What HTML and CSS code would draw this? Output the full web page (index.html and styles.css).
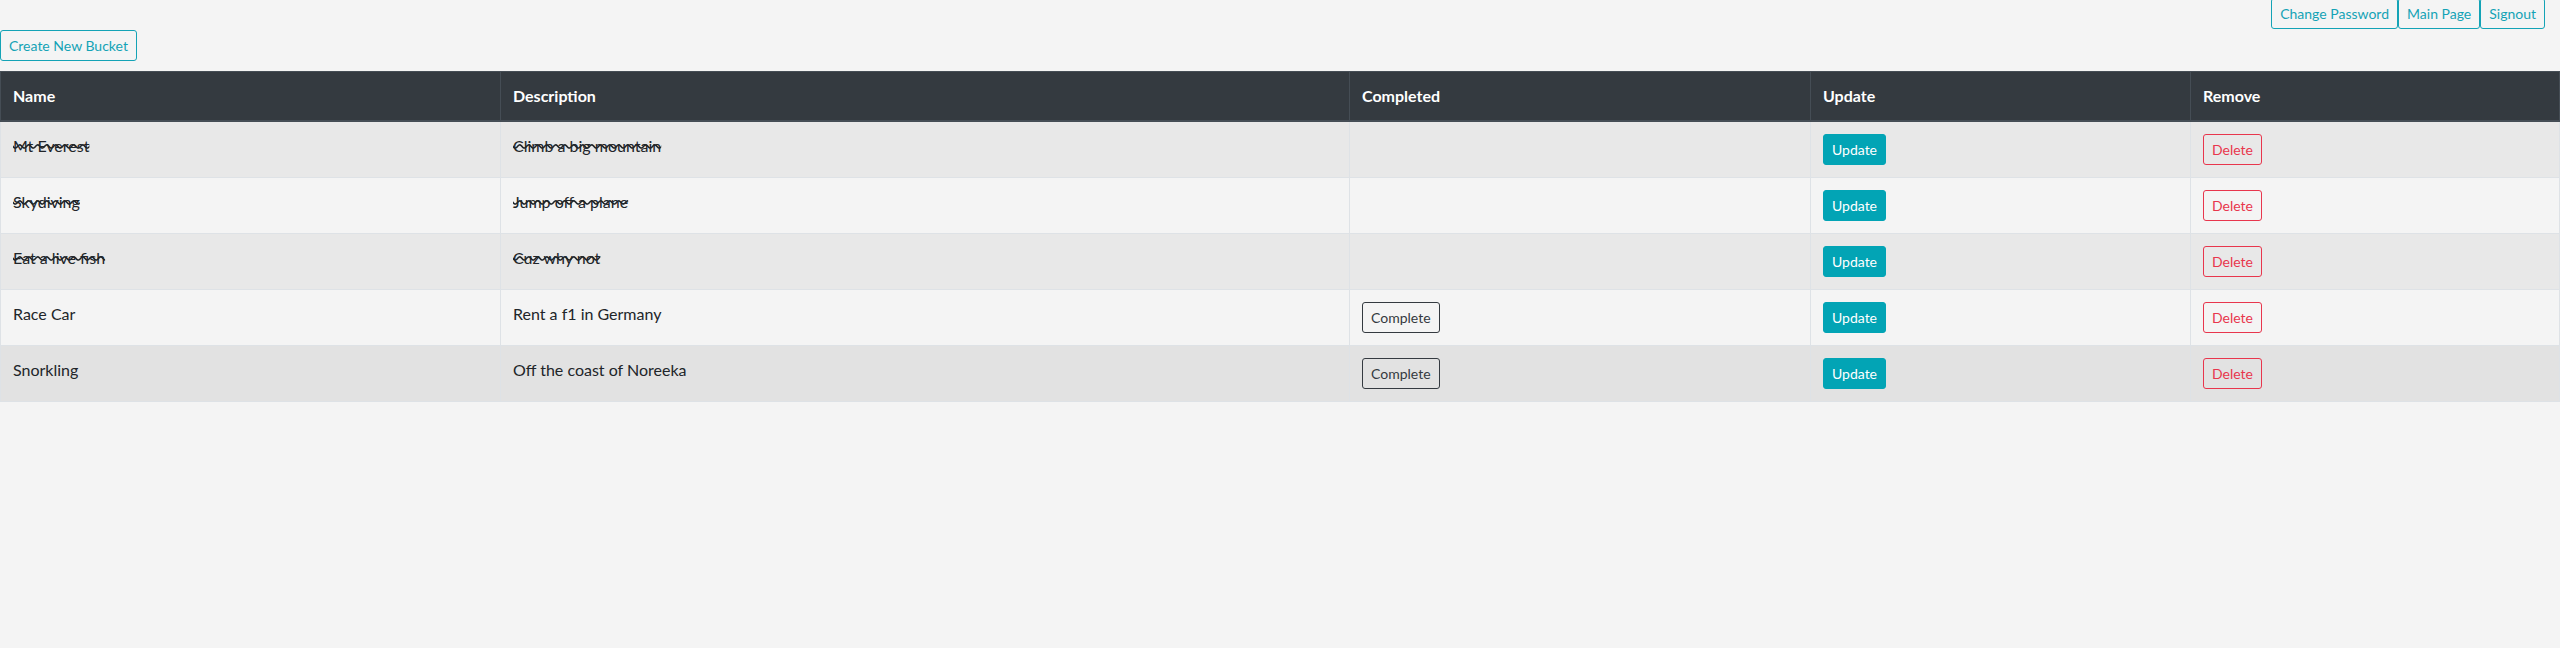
FILE: index.html
```html
<!DOCTYPE html>
<html lang="en">
<head>
<meta charset="utf-8">
<title>Bucket List</title>
<link rel="stylesheet" href="styles.css">
</head>
<body>
<nav class="topbar">
  <a class="btn btn-outline-info">Change Password</a><a class="btn btn-outline-info">Main Page</a><a class="btn btn-outline-info">Signout</a>
</nav>
<div class="actions">
  <a class="btn btn-outline-info">Create New Bucket</a>
</div>
<table class="buckets">
  <thead>
    <tr>
      <th class="col-name">Name</th>
      <th class="col-desc">Description</th>
      <th class="col-done">Completed</th>
      <th class="col-update">Update</th>
      <th class="col-remove">Remove</th>
    </tr>
  </thead>
  <tbody>
    <tr class="odd">
      <td><span class="done">Mt Everest</span></td>
      <td><span class="done">Climb a big mountain</span></td>
      <td></td>
      <td><a class="btn btn-info">Update</a></td>
      <td><a class="btn btn-outline-danger">Delete</a></td>
    </tr>
    <tr>
      <td><span class="done">Skydiving</span></td>
      <td><span class="done">Jump off a plane</span></td>
      <td></td>
      <td><a class="btn btn-info">Update</a></td>
      <td><a class="btn btn-outline-danger">Delete</a></td>
    </tr>
    <tr class="odd">
      <td><span class="done">Eat a live fish</span></td>
      <td><span class="done">Cuz why not</span></td>
      <td></td>
      <td><a class="btn btn-info">Update</a></td>
      <td><a class="btn btn-outline-danger">Delete</a></td>
    </tr>
    <tr>
      <td>Race Car</td>
      <td>Rent a f1 in Germany</td>
      <td><a class="btn btn-outline-dark">Complete</a></td>
      <td><a class="btn btn-info">Update</a></td>
      <td><a class="btn btn-outline-danger">Delete</a></td>
    </tr>
    <tr class="hover">
      <td>Snorkling</td>
      <td>Off the coast of Noreeka</td>
      <td><a class="btn btn-outline-dark">Complete</a></td>
      <td><a class="btn btn-info">Update</a></td>
      <td><a class="btn btn-outline-danger">Delete</a></td>
    </tr>
  </tbody>
</table>
</body>
</html>
```

FILE: styles.css
```css
html, body {
  margin: 0;
  padding: 0;
}

body {
  background: #f4f4f4;
  color: #212529;
  font-family: Lato, "Open Sans", "Liberation Sans", sans-serif;
  font-size: 16px;
  line-height: 24px;
}

.topbar {
  display: flex;
  justify-content: flex-end;
  padding-right: 15px;
  margin-top: -2px;
}

.actions {
  margin-top: 1px;
  margin-bottom: 10px;
}

.btn {
  display: inline-block;
  box-sizing: border-box;
  height: 31px;
  padding: 4px 8px;
  font-size: 14px;
  line-height: 21px;
  border: 1px solid transparent;
  border-radius: 3px;
  text-decoration: none;
  cursor: pointer;
  white-space: nowrap;
  vertical-align: top;
}

.btn-outline-info {
  color: #14a3b6;
  border-color: #14a3b6;
  background: transparent;
}

.btn-info {
  color: #fff;
  background: #02a4b5;
  border-color: #02a4b5;
}

.btn-outline-danger {
  color: #e8364d;
  border-color: #e8364d;
  background: transparent;
}

.btn-outline-dark {
  color: #343a40;
  border-color: #343a40;
  background: transparent;
}

.buckets {
  width: 100%;
  border-collapse: collapse;
  table-layout: fixed;
  border: 1px solid #dee2e6;
}

.buckets th,
.buckets td {
  box-sizing: border-box;
  padding: 12px;
  text-align: left;
  vertical-align: top;
  border: 1px solid #dee2e6;
}

.buckets th {
  background: #343a40;
  color: #fff;
  font-weight: 700;
  border-color: #454d55;
  border-bottom-width: 2px;
}

.col-name { width: 500px; }
.col-desc { width: 849px; }
.col-done { width: 461px; }
.col-update { width: 380px; }

.buckets tr.odd td {
  background: #e8e8e8;
}

.buckets tr.hover td {
  background: #e2e2e2;
}

.done {
  text-decoration: line-through wavy;
}
```
